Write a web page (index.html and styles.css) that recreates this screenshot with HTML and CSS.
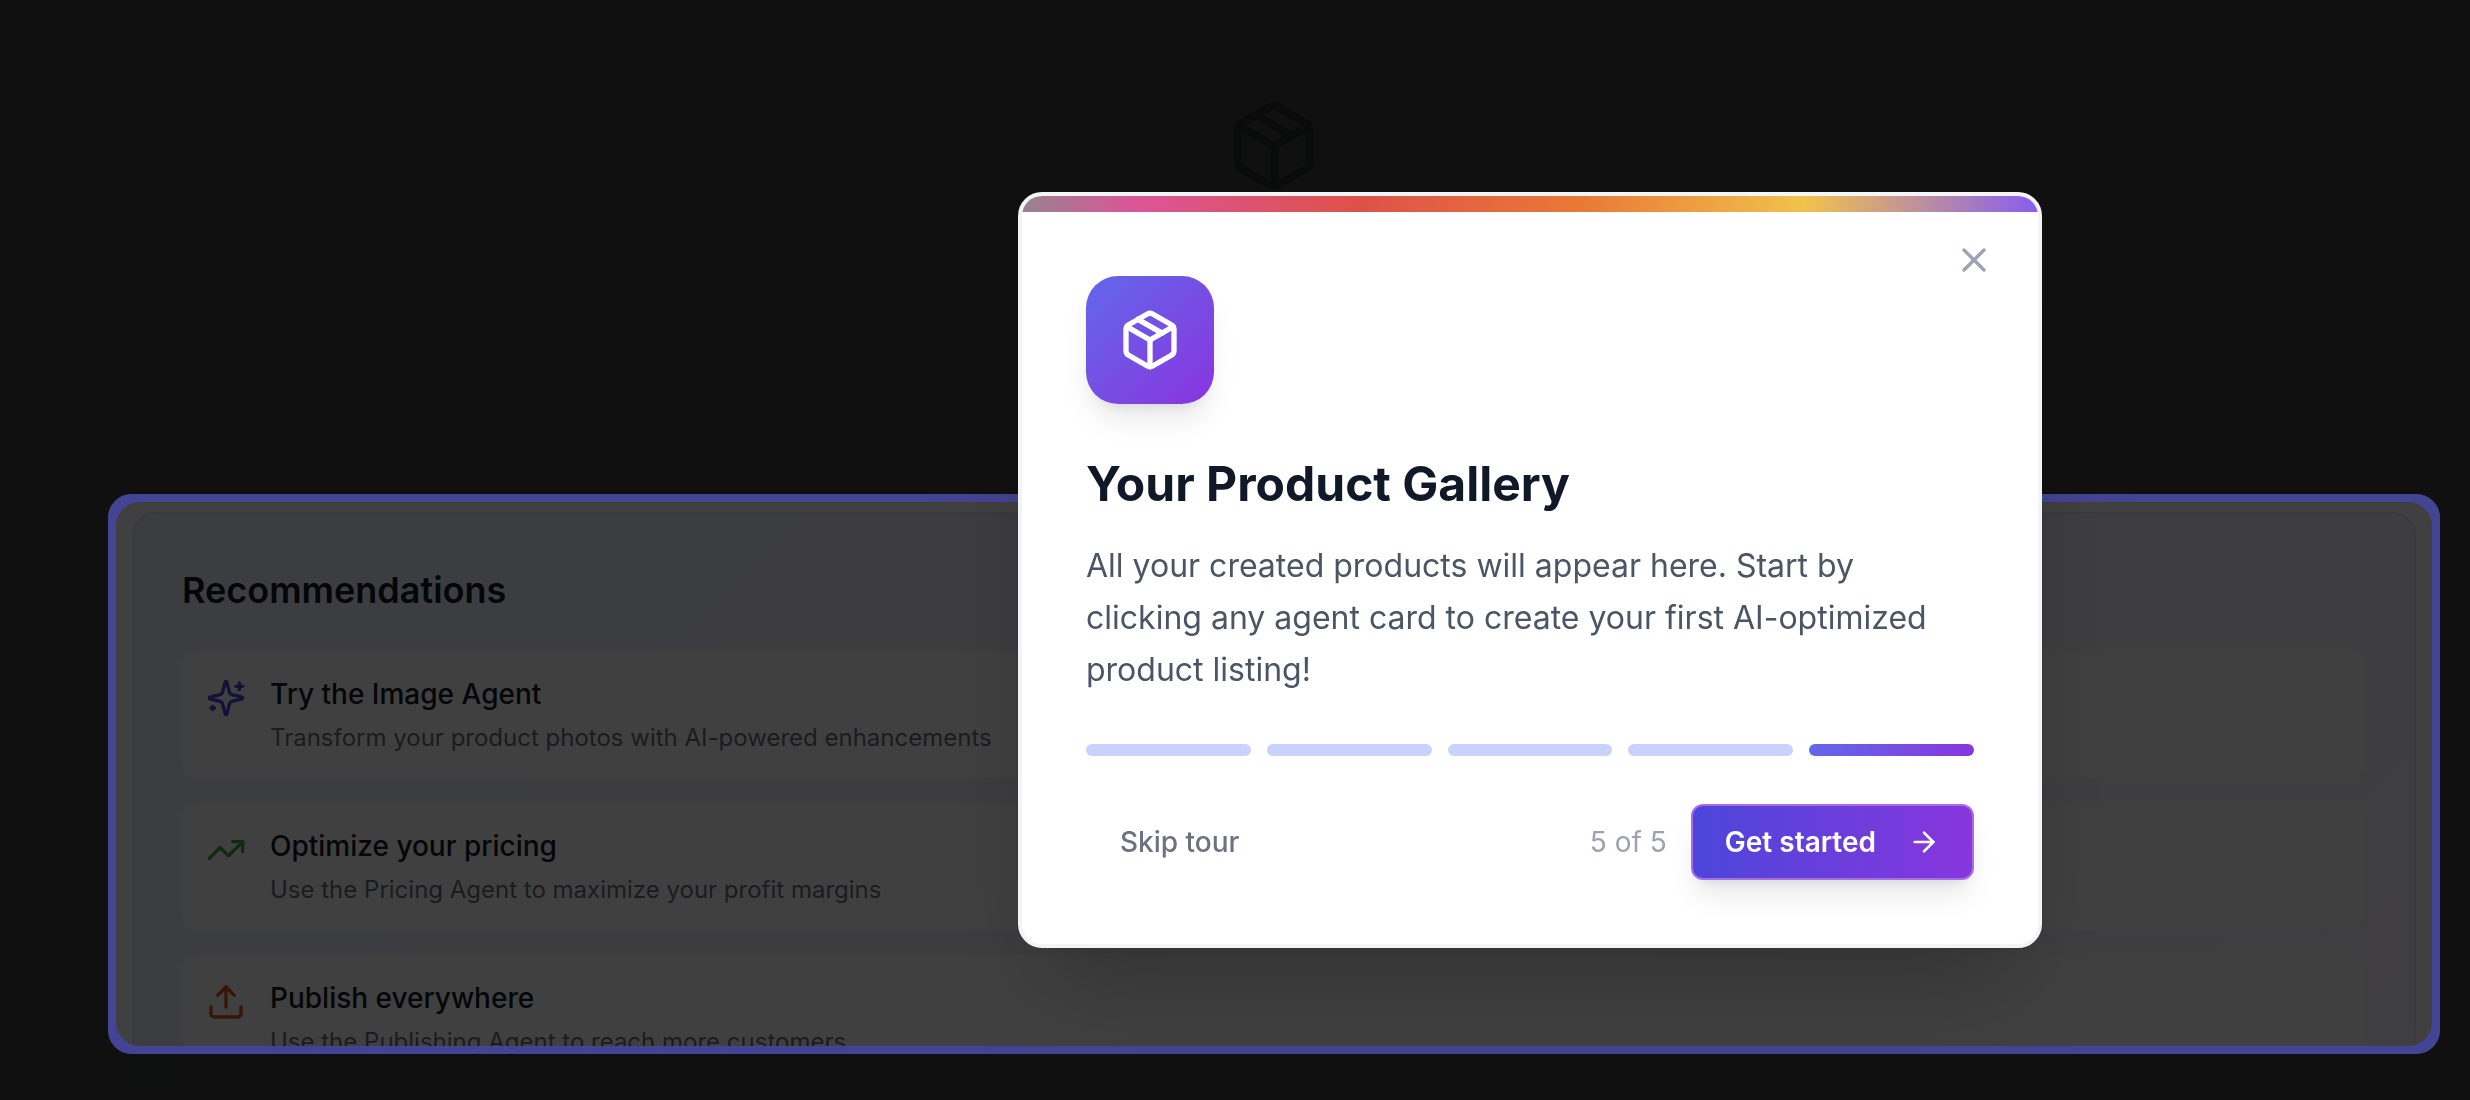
FILE: index.html
```html
<!DOCTYPE html>
<html lang="en">
<head>
<meta charset="utf-8">
<meta name="viewport" content="width=device-width, initial-scale=1">
<title>Product Gallery</title>
<link rel="stylesheet" href="styles.css">
</head>
<body>
<svg class="sprite" aria-hidden="true">
  <symbol id="package" viewBox="0 0 24 24">
    <path d="m7.5 4.27 9 5.15"/>
    <path d="M21 8a2 2 0 0 0-1-1.73l-7-4a2 2 0 0 0-2 0l-7 4A2 2 0 0 0 3 8v8a2 2 0 0 0 1 1.73l7 4a2 2 0 0 0 2 0l7-4A2 2 0 0 0 21 16Z"/>
    <path d="m3.3 7 8.7 5 8.7-5"/>
    <path d="M12 22V12"/>
  </symbol>
</svg>

<main class="page">
  <section class="gallery" aria-label="Products">
    <svg class="icon gallery-icon" aria-hidden="true"><use href="#package"/></svg>
  </section>

  <section class="recommendations">
    <h2 class="section-title">Recommendations</h2>
    <ul class="rec-list">
      <li class="rec">
        <svg class="icon rec-icon indigo" viewBox="0 0 24 24" aria-hidden="true">
          <path d="M9.937 15.5A2 2 0 0 0 8.5 14.063l-6.135-1.582a.5.5 0 0 1 0-.962L8.5 9.936A2 2 0 0 0 9.937 8.5l1.582-6.135a.5.5 0 0 1 .963 0L14.063 8.5A2 2 0 0 0 15.5 9.937l6.135 1.581a.5.5 0 0 1 0 .964L15.5 14.063a2 2 0 0 0-1.437 1.437l-1.582 6.135a.5.5 0 0 1-.963 0z"/>
          <path d="M20 3v4"/><path d="M22 5h-4"/><path d="M4 17v2"/><path d="M5 18H3"/>
        </svg>
        <div class="rec-body">
          <h3 class="rec-title">Try the Image Agent</h3>
          <p class="rec-text">Transform your product photos with AI-powered enhancements</p>
        </div>
      </li>
      <li class="rec">
        <svg class="icon rec-icon green" viewBox="0 0 24 24" aria-hidden="true">
          <path d="m22 7-8.5 8.5-5-5L2 17"/><path d="M16 7h6v6"/>
        </svg>
        <div class="rec-body">
          <h3 class="rec-title">Optimize your pricing</h3>
          <p class="rec-text">Use the Pricing Agent to maximize your profit margins</p>
        </div>
      </li>
      <li class="rec">
        <svg class="icon rec-icon orange" viewBox="0 0 24 24" aria-hidden="true">
          <path d="M21 15v4a2 2 0 0 1-2 2H5a2 2 0 0 1-2-2v-4"/><path d="m17 8-5-5-5 5"/><path d="M12 3v12"/>
        </svg>
        <div class="rec-body">
          <h3 class="rec-title">Publish everywhere</h3>
          <p class="rec-text">Use the Publishing Agent to reach more customers</p>
        </div>
      </li>
    </ul>
  </section>
</main>

<div class="backdrop"></div>
<div class="spotlight"><div class="spotlight-ring"></div></div>

<div class="tour" role="dialog" aria-modal="true" aria-labelledby="tour-title">
  <div class="tour-stripe"></div>
  <button class="tour-close" type="button" aria-label="Close">
    <svg class="icon close-icon" viewBox="0 0 24 24" aria-hidden="true"><path d="M18 6 6 18"/><path d="m6 6 12 12"/></svg>
  </button>
  <div class="tour-content">
    <div class="tour-badge">
      <svg class="icon badge-icon" aria-hidden="true"><use href="#package"/></svg>
    </div>
    <h1 class="tour-title" id="tour-title">Your Product Gallery</h1>
    <p class="tour-text">All your created products will appear here. Start by clicking any agent card to create your first AI-optimized product listing!</p>
    <div class="steps">
      <span class="step"></span>
      <span class="step"></span>
      <span class="step"></span>
      <span class="step"></span>
      <span class="step current"></span>
    </div>
    <div class="tour-actions">
      <button class="btn skip" type="button">Skip tour</button>
      <div class="tour-next">
        <span class="count">5 of 5</span>
        <button class="btn primary" type="button">Get started
          <svg class="icon arrow-icon" viewBox="0 0 24 24" aria-hidden="true"><path d="M5 12h14"/><path d="m12 5 7 7-7 7"/></svg>
        </button>
      </div>
    </div>
  </div>
</div>
</body>
</html>
```
FILE: styles.css
```css
* {
  box-sizing: border-box;
}

body {
  margin: 0;
  height: 100vh;
  overflow: hidden;
  background: #fff;
  color: #111827;
  font-family: Inter, "Liberation Sans", sans-serif;
}

h1, h2, h3, p, ul {
  margin: 0;
  padding: 0;
}

.sprite {
  display: none;
}

.icon {
  flex: none;
  fill: none;
  stroke: currentColor;
  stroke-width: 2;
  stroke-linecap: round;
  stroke-linejoin: round;
}

/* Page behind the tour */
.page {
  display: flex;
  flex-direction: column;
  gap: 64px;
  padding: 0 54px 0 132px;
}

.gallery {
  display: flex;
  justify-content: center;
  align-items: flex-start;
  min-height: 448px;
  padding: 98px 96px;
  border: 2px solid #f3f4f6;
  border-top: 0;
  border-radius: 0 0 24px 24px;
}

.gallery-icon {
  width: 96px;
  height: 96px;
  color: #a3a8b0;
}

.recommendations {
  display: flex;
  flex-direction: column;
  gap: 32px;
  padding: 48px;
  border: 2px solid #e0e7ff;
  border-radius: 24px;
  background: linear-gradient(135deg, #eef2ff, #faf5ff);
}

.section-title {
  font-size: 36px;
  line-height: 56px;
  font-weight: 600;
}

.rec-list {
  display: flex;
  flex-direction: column;
  gap: 24px;
  list-style: none;
}

.rec {
  display: flex;
  align-items: flex-start;
  gap: 24px;
  padding: 24px;
  border-radius: 16px;
  background: #fff;
}

.rec-icon {
  width: 40px;
  height: 40px;
  margin-top: 4px;
}

.indigo { color: #5046dc; }
.green { color: #4a9c50; }
.orange { color: #d9561f; }

.rec-body {
  display: flex;
  flex-direction: column;
  gap: 8px;
}

.rec-title {
  font-size: 28px;
  line-height: 40px;
  font-weight: 500;
}

.rec-text {
  color: #6b7280;
  font-size: 24px;
  line-height: 32px;
}

/* Dimming and highlight */
.backdrop {
  position: fixed;
  inset: 0;
  background: rgba(0, 0, 0, 0.75);
}

.spotlight {
  position: fixed;
  inset: 494px 30px 46px 108px;
  padding: 8px;
  overflow: hidden;
  border-radius: 24px;
  box-shadow: 0 0 0 4000px rgba(0, 0, 0, 0.75);
}

.spotlight-ring {
  height: 100%;
  border-radius: 24px;
  box-shadow: 0 0 0 16px rgba(68, 68, 153, 0.94);
}

/* Tour dialog */
.tour {
  position: fixed;
  top: 192px;
  right: 428px;
  width: 1024px;
  max-width: calc(100vw - 32px);
  overflow: hidden;
  border: 4px solid #f3f4f6;
  border-radius: 24px;
  background: #fff;
  box-shadow: 0 50px 100px -24px rgba(0, 0, 0, 0.25);
}

.tour-stripe {
  height: 16px;
  background: linear-gradient(90deg, #97838f 0%, #db5598 11%, #de514a 33%, #e97936 55%, #f1c24c 77%, #885df0 100%);
}

.tour-close {
  position: absolute;
  top: 32px;
  right: 32px;
  display: flex;
  padding: 12px;
  border: 0;
  background: none;
  color: #9ca3af;
}

.close-icon {
  width: 40px;
  height: 40px;
}

.tour-content {
  padding: 64px;
}

.tour-badge {
  display: flex;
  align-items: center;
  justify-content: center;
  width: 128px;
  height: 128px;
  margin-bottom: 48px;
  border-radius: 32px;
  background: linear-gradient(135deg, #6268ea, #8a34df);
  color: #fff;
  box-shadow: 0 20px 30px -6px rgba(0, 0, 0, 0.1), 0 8px 12px -8px rgba(0, 0, 0, 0.1);
}

.badge-icon {
  width: 64px;
  height: 64px;
}

.tour-title {
  margin-bottom: 24px;
  font-size: 48px;
  line-height: 64px;
  font-weight: 700;
}

.tour-text {
  margin-bottom: 48px;
  color: #4b5563;
  font-size: 32px;
  line-height: 52px;
}

.steps {
  display: flex;
  gap: 16px;
  margin-bottom: 48px;
}

.step {
  flex: 1;
  height: 12px;
  border-radius: 6px;
  background: #c8d2fc;
}

.step.current {
  background: linear-gradient(90deg, #6268ea, #8836dd);
}

.tour-actions,
.tour-next {
  display: flex;
  align-items: center;
}

.tour-actions {
  justify-content: space-between;
}

.tour-next {
  gap: 24px;
}

.count {
  color: #9ca3af;
  font-size: 28px;
  line-height: 40px;
}

.btn {
  display: flex;
  align-items: center;
  gap: 32px;
  padding: 16px 32px;
  border: 2px solid transparent;
  border-radius: 12px;
  background: none;
  font-family: inherit;
  font-size: 28px;
  line-height: 40px;
}

.skip {
  color: #6b7280;
  font-weight: 500;
}

.primary {
  border-color: #a86ee8;
  background: linear-gradient(90deg, #4c46da, #8836dd);
  color: #fff;
  font-weight: 600;
  box-shadow: 0 20px 30px -6px rgba(0, 0, 0, 0.1), 0 8px 12px -8px rgba(0, 0, 0, 0.1);
}

.arrow-icon {
  width: 32px;
  height: 32px;
}
```
